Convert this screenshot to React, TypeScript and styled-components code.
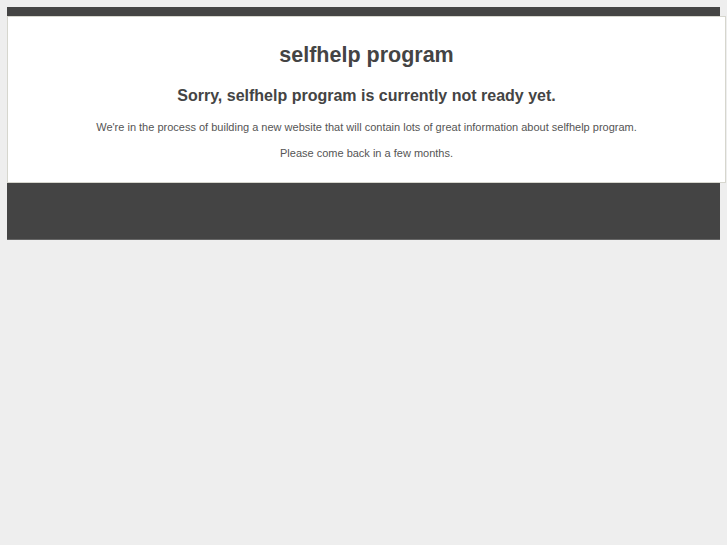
import { createGlobalStyle } from 'styled-components';
import styled from 'styled-components';

const GlobalStyle = createGlobalStyle`
  html, body {
    margin: 0;
    padding: 0;
    background: #eeeeee;
    font-family: "Liberation Sans", Arial, Helvetica, sans-serif;
  }
`;

const Page = styled.div`
  padding: 7px 0 0 7px;
  width: 713px;
`;

const TopBar = styled.div`
  height: 9px;
  background: #444444;
`;

const Content = styled.div`
  width: 717px;
  background: #ffffff;
  border: 1px solid #d6d6ce;
  text-align: center;
  color: #444444;
  padding: 26px 0 10px;
`;

const Title = styled.h1`
  margin: 0 0 18px;
  font-size: 21.5px;
  font-weight: bold;
  line-height: 24px;
`;

const Subtitle = styled.h2`
  margin: 0 0 12px;
  font-size: 16px;
  font-weight: bold;
  line-height: 22px;
`;

const Text = styled.p`
  margin: 0 0 12px;
  font-size: 11px;
  line-height: 14px;
  color: #555555;

  &:first-of-type {
    padding-top: 1px;
  }
`;

const Footer = styled.div`
  height: 56px;
  background: #444444;
  border-bottom: 1px solid #666666;
`;

export default function App() {
  return (
    <>
      <GlobalStyle />
      <Page>
        <TopBar />
        <Content>
          <Title>selfhelp program</Title>
          <Subtitle>Sorry, selfhelp program is currently not ready yet.</Subtitle>
          <Text>
            We're in the process of building a new website that will contain lots of great information about
            selfhelp program.
          </Text>
          <Text>Please come back in a few months.</Text>
        </Content>
        <Footer />
      </Page>
    </>
  );
}
